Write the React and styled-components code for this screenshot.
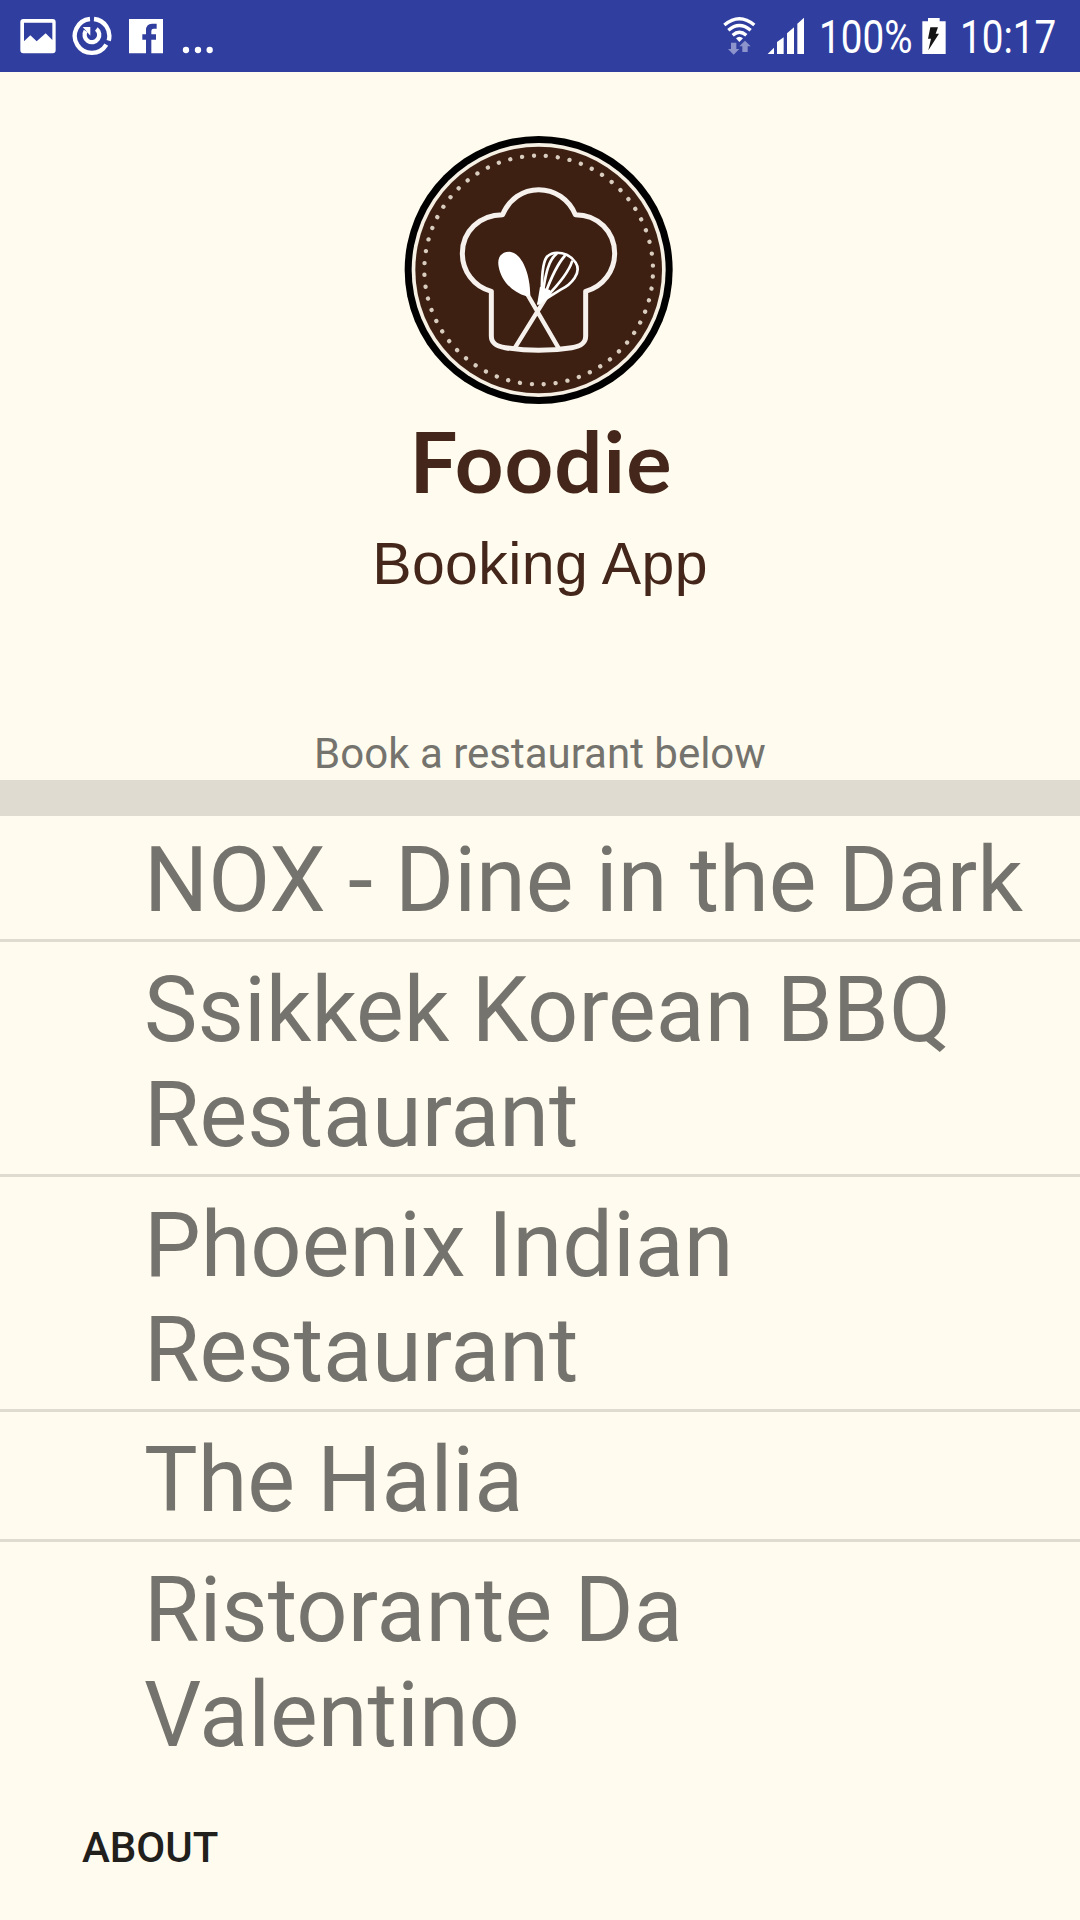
import React from 'react'
import styled, { createGlobalStyle } from 'styled-components'

const restaurants = [
    'NOX - Dine in the Dark',
    'Ssikkek Korean BBQ Restaurant',
    'Phoenix Indian Restaurant',
    'The Halia',
    'Ristorante Da Valentino',
]

export default function App(){

    return(
        <Screen>
            <GlobalStyle />
            <StatusBar />
            <Brand>
                <Logo />
                <Title>Foodie</Title>
                <Subtitle>Booking App</Subtitle>
            </Brand>
            <Hint>Book a restaurant below</Hint>
            <Bar />
            <List>
                {restaurants.map((name) => <Item key={name}>{name}</Item>)}
            </List>
            <AboutButton>About</AboutButton>
        </Screen>
    )
}

function StatusBar(){
    return(
        <StatusHeader>
            <Icon $width={36} viewBox='60 0 108 216'>
                <path fillRule='evenodd' d='M70 57H158Q167 57 167 66V151Q167 160 158 160H70Q61 160 61 151V66Q61 57 70 57ZM72 68V124L91 106L110 124L137 100L157 120V68Z' />
            </Icon>
            <Icon $width={40} viewBox='216 0 120 216'>
                <g fill='none' stroke='#fff' strokeWidth='13'>
                    <path d='M270 57A51 51 0 1 0 319 134' />
                    <path d='M282 57A51 51 0 0 1 326 122' />
                    <path d='M289 87A22 22 0 1 1 257 93' />
                </g>
                <path d='M248 81H271V107Z' />
            </Icon>
            <Icon $width={36} viewBox='384 0 108 216'>
                <path d='M387 57H489V160H454V119H468V103H454V93Q454 86 461 86H470V71H456Q438 71 438 91V103H427V119H438V160H387Z' />
            </Icon>
            <Icon $width={35} viewBox='540 0 105 216'>
                <circle cx='558' cy='150' r='9.5' />
                <circle cx='594' cy='150' r='9.5' />
                <circle cx='629' cy='150' r='9.5' />
            </Icon>
            <Spacer />
            <Icon $width={33} viewBox='69 0 99 216'>
                <g fill='none' stroke='#fff' strokeWidth='10'>
                    <path d='M73 75Q118 37 163 75' />
                    <path d='M85 91Q118 62 152 91' />
                    <path d='M98 106Q118 88 139 106' />
                </g>
                <path d='M108 115Q118 106 129 115L118 126Z' />
                <path fill='#8d94cc' d='M93 128H109V147H118L101 164L84 147H93ZM127 156V139H118L135 122L152 139H143V156Z' />
            </Icon>
            <Icon $width={38} viewBox='201 0 114 216'>
                <path d='M203 162L222 143V162ZM231 162V126L251 112V162ZM261 162V100L282 82V162ZM292 162V71L312 53V162Z' />
            </Icon>
            <Label $width={95}><span>100%</span></Label>
            <Icon $width={24} viewBox='665 0 72 216'>
                <path d='M683 54H718V64H736V162H666V64H683Z' />
                <path fill='#151515' d='M690 82H713L706 101H716L684 151L692 116H683Z' />
            </Icon>
            <Label $width={102}><span>10:17</span></Label>
        </StatusHeader>
    )
}

function Logo(){
    return(
        <LogoSvg viewBox='0 0 900 900'>
            <circle cx='446' cy='450' r='402' fill='#000' />
            <circle cx='446' cy='450' r='381' fill='#f7f0e4' />
            <circle cx='446' cy='450' r='370' fill='#3d2012' />
            <circle cx='446' cy='450' r='343' stroke='#d9cdc0' strokeWidth='13' strokeLinecap='round' strokeDasharray='0.1 35.82' strokeDashoffset='-20' />
            <g stroke='#f7f1ee' strokeWidth='15' strokeLinejoin='round' strokeLinecap='round'>
                <path d='M304 514C250 500 217 452 217 400C217 335 268 284 338 284C357 238 398 209 446 209C494 209 537 238 556 284C624 284 674 335 674 400C674 452 640 500 587 514V648C587 671 571 679 545 683Q446 699 346 683C320 679 304 671 304 648Z' />
                <path d='M408 516L505 683M476 520L375 683' strokeWidth='13' />
            </g>
            <path fill='#fff' d='M326 440C320 410 337 394 359 395C389 397 420 448 421 526L410 529C365 517 333 480 326 440Z' />
            <g stroke='#fff' strokeWidth='8' strokeLinecap='round'>
                <path d='M455 543C456 490 454 433 471 410C494 388 539 399 557 428C577 459 542 494 512 509L446 550' />
                <path d='M456 528C465 485 469 425 500 401' />
                <path d='M463 528C478 487 497 438 524 408' />
                <path d='M470 530C500 499 534 462 546 425' />
            </g>
            <path fill='#fff' d='M450 500L480 510L486 524L441 556Z' />
        </LogoSvg>
    )
}

const GlobalStyle = createGlobalStyle`
    * {
        box-sizing: border-box;
    }

    body {
        margin: 0;
        background-color: #fffbee;
        font-family: Roboto, sans-serif;
    }
`

const Screen = styled.div`
    display: flex;
    flex-direction: column;
    width: 1080px;
    height: 1920px;
    overflow: hidden;
    background-color: #fffbee;
`

const StatusHeader = styled.header`
    display: flex;
    flex-shrink: 0;
    height: 72px;
    padding: 0 21px 0 20px;
    background-color: #303f9f;

    > svg {
        margin-right: 16px;
    }

    div ~ svg {
        margin-right: 11px;
    }
`

const Icon = styled.svg`
    flex-shrink: 0;
    width: ${(props) => props.$width}px;
    height: 72px;
    fill: #fff;
`

const Spacer = styled.div`
    flex: 1;
`

const Label = styled.div`
    width: ${(props) => props.$width}px;
    margin-right: 11px;
    padding-left: 3px;
    color: #fff;
    font-size: 46px;
    line-height: 74px;

    span {
        display: inline-block;
        transform: scaleX(0.84);
        transform-origin: left;
    }

    &:last-child {
        margin-right: 0;
    }
`

const Brand = styled.section`
    display: flex;
    flex-direction: column;
    align-items: center;
    flex-shrink: 0;
    height: 656px;
    padding-top: 48px;
    color: #44271a;
`

const LogoSvg = styled.svg`
    width: 300px;
    height: 300px;
    fill: none;
`

const Title = styled.h1`
    margin: 0 0 0 2px;
    font-family: Lato, sans-serif;
    font-size: 85px;
    font-weight: 700;
    letter-spacing: 1px;
    line-height: 80px;
`

const Subtitle = styled.h2`
    margin: 0;
    font-family: "Liberation Sans", Arial, sans-serif;
    font-size: 59px;
    font-weight: 400;
    letter-spacing: 0.4px;
    line-height: 128px;
`

const Hint = styled.p`
    flex-shrink: 0;
    height: 52px;
    margin: 0;
    color: #75736d;
    font-size: 42px;
    line-height: 52px;
    text-align: center;
`

const Bar = styled.div`
    flex-shrink: 0;
    height: 36px;
    background-color: #dfdbd0;
`

const List = styled.ul`
    height: 954px;
    flex-shrink: 0;
    margin: 0;
    padding: 0;
    list-style: none;
`

const Item = styled.li`
    padding: 16px 24px 6px 144px;
    border-bottom: 3px solid #dfdbd0;
    color: #75736d;
    font-size: 90px;
    line-height: 105px;

    &:first-child {
        padding-top: 12px;
    }

    &:last-child {
        border-bottom: none;
    }
`

const AboutButton = styled.button`
    align-self: flex-start;
    margin: 0;
    padding: 53px 82px 49px;
    border: none;
    background: none;
    color: #22201d;
    font-family: Roboto, sans-serif;
    font-size: 42px;
    font-weight: 500;
    line-height: 50px;
    text-transform: uppercase;
`
